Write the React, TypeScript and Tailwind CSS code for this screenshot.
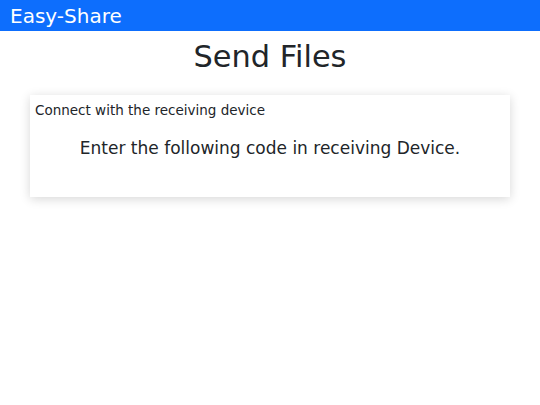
import React from 'react';

const App: React.FC = () => {
  return (
    <div className="min-h-screen bg-white text-[#212529] font-['DejaVu_Sans',sans-serif]">
      <nav className="bg-[#0d6efd] h-[31px] flex items-center px-[10px]">
        <span className="text-white text-[20px] leading-none">Easy-Share</span>
      </nav>

      <h1 className="text-center text-[30.4px] leading-[1.2] mt-[8px] mb-[20px]">Send Files</h1>

      <div className="mx-[30px] bg-white shadow-[0_2px_10px_rgba(0,0,0,0.16)] px-[5px] pt-[4px] pb-[35px]">
        <p className="text-[13.5px] leading-[22px]">Connect with the receiving device</p>
        <p className="text-center text-[17px] leading-[25.5px] mt-[15px]">
          Enter the following code in receiving Device.
        </p>
      </div>
    </div>
  );
};

export default App;
